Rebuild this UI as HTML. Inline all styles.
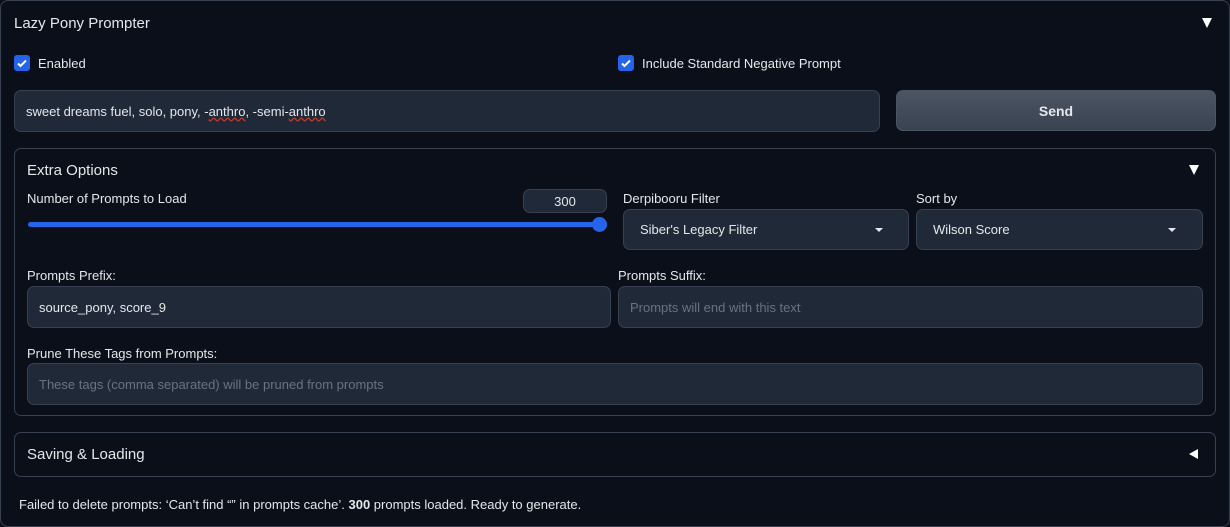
<!DOCTYPE html><html><head><style>
*{box-sizing:border-box;margin:0;padding:0}
body{width:1230px;height:527px;background:#0b0f19;font-family:"Liberation Sans",sans-serif;color:#e5e7eb;position:relative;overflow:hidden;font-size:13px;letter-spacing:0}
.a{position:absolute}
.box{position:absolute;border:1px solid #374151;border-radius:7px}
.inp{position:absolute;background:#1f2937;border:1px solid #374151;border-radius:7px;padding-left:11px;display:flex;align-items:center;font-size:13px}
.ph{color:#6b7280}
.cb{position:absolute;width:16px;height:16px;background:#2563eb;border-radius:3px}
.tri{position:absolute;width:0;height:0;border-left:5px solid transparent;border-right:5px solid transparent;border-top:10px solid #fff}
.dd{position:absolute;width:0;height:0;border-left:4px solid transparent;border-right:4px solid transparent;border-top:4px solid #e5e7eb}
</style></head><body>
<div class="box" style="left:0;top:0;width:1230px;height:527px;border-radius:8px"></div>
<div class="a" style="left:14px;top:15px;font-size:15px">Lazy Pony Prompter</div>
<div class="tri" style="left:1202px;top:18px"></div>
<div class="cb" style="left:14px;top:55px"><svg width="16" height="16"><path d="M4 8.5l2.5 2.5L12 5.5" stroke="#fff" stroke-width="2" fill="none"/></svg></div>
<div class="a" style="left:38px;top:56px">Enabled</div>
<div class="cb" style="left:618px;top:55px"><svg width="16" height="16"><path d="M4 8.5l2.5 2.5L12 5.5" stroke="#fff" stroke-width="2" fill="none"/></svg></div>
<div class="a" style="left:642px;top:56px">Include Standard Negative Prompt</div>
<div class="inp" style="left:14px;top:90px;width:866px;height:42px">sweet dreams fuel, solo, pony, -<span style="text-decoration:underline wavy #c0392b">anthro</span>, -semi-<span style="text-decoration:underline wavy #c0392b">anthro</span></div>
<div class="a" style="left:896px;top:90px;width:320px;height:41px;border-radius:7px;background:linear-gradient(#4b5563,#3a4350);border:1px solid #4b5563;display:flex;align-items:center;justify-content:center;font-weight:bold;font-size:14px">Send</div>
<div class="box" style="left:14px;top:148px;width:1202px;height:268px"></div>
<div class="a" style="left:27px;top:162px;font-size:15px">Extra Options</div>
<div class="tri" style="left:1189px;top:165px"></div>
<div class="a" style="left:27px;top:191px">Number of Prompts to Load</div>
<div class="inp" style="left:523px;top:189px;width:84px;height:24px;padding:0;justify-content:center">300</div>
<div class="a" style="left:28px;top:222px;width:572px;height:5px;background:#2563eb;border-radius:3px"></div>
<div class="a" style="left:592px;top:217px;width:15px;height:15px;background:#2563eb;border-radius:50%"></div>
<div class="a" style="left:623px;top:191px">Derpibooru Filter</div>
<div class="inp" style="left:623px;top:209px;width:286px;height:41px;padding-left:16px">Siber's Legacy Filter</div>
<div class="dd" style="left:875px;top:228px"></div>
<div class="a" style="left:916px;top:191px">Sort by</div>
<div class="inp" style="left:916px;top:209px;width:287px;height:41px;padding-left:16px">Wilson Score</div>
<div class="dd" style="left:1168px;top:228px"></div>
<div class="a" style="left:27px;top:268px">Prompts Prefix:</div>
<div class="inp" style="left:27px;top:286px;width:584px;height:42px">source_pony, score_9</div>
<div class="a" style="left:618px;top:268px">Prompts Suffix:</div>
<div class="inp ph" style="left:618px;top:286px;width:585px;height:42px">Prompts will end with this text</div>
<div class="a" style="left:27px;top:346px">Prune These Tags from Prompts:</div>
<div class="inp ph" style="left:27px;top:363px;width:1176px;height:42px">These tags (comma separated) will be pruned from prompts</div>
<div class="box" style="left:14px;top:432px;width:1202px;height:45px"></div>
<div class="a" style="left:27px;top:446px;font-size:15px">Saving &amp; Loading</div>
<div class="a" style="left:1189px;top:449px;width:0;height:0;border-top:5px solid transparent;border-bottom:5px solid transparent;border-right:9px solid #fff"></div>
<div class="a" style="left:19px;top:497px">Failed to delete prompts: ‘Can’t find “” in prompts cache’. <b>300</b> prompts loaded. Ready to generate.</div>
</body></html>
